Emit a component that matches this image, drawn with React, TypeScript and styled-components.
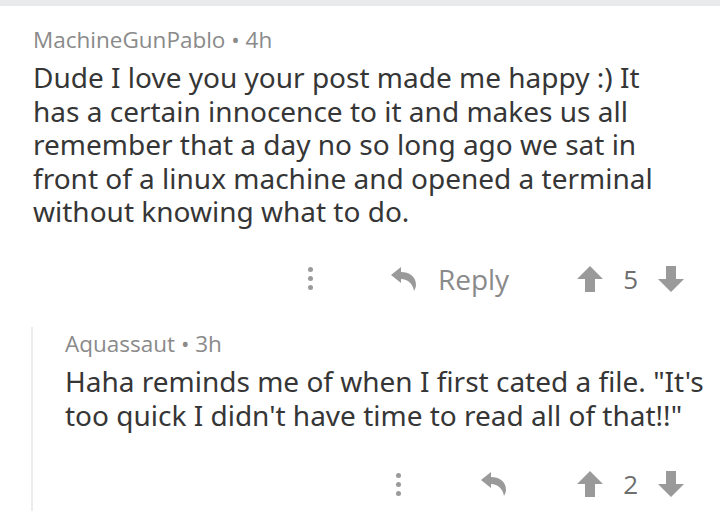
import React from "react";
import styled, { createGlobalStyle } from "styled-components";

const Global = createGlobalStyle`
  html, body { margin: 0; padding: 0; background: #ffffff; }
  body { width: 720px; height: 511px; overflow: hidden; }
`;

const Page = styled.div`
  width: 720px;
  height: 511px;
  background: #fff;
  display: flex;
  flex-direction: column;
`;

const TopBar = styled.div`
  height: 6px;
  background: #e9eaec;
  flex-shrink: 0;
`;

const Comment = styled.div<{ $nested?: boolean }>`
  display: flex;
  flex-direction: column;
  margin-left: ${(p) => (p.$nested ? "31px" : "33px")};
  padding-left: ${(p) => (p.$nested ? "32px" : "0")};
  border-left: ${(p) => (p.$nested ? "2px solid #ececec" : "none")};
  padding-top: ${(p) => (p.$nested ? "3px" : "20px")};
  flex: ${(p) => (p.$nested ? "1" : "none")};
`;

const Meta = styled.div`
  font-family: "Open Sans", "Noto Sans", sans-serif;
  font-size: 22.5px;
  line-height: 28px;
  color: #8a8a8a;
`;

const Body = styled.div<{ $nested?: boolean }>`
  font-family: "Noto Sans", "Open Sans", sans-serif;
  font-size: 28px;
  line-height: 33.6px;
  color: #363636;
  margin-top: 7px;
  padding-right: ${(p) => (p.$nested ? "10px" : "37px")};
`;

const Actions = styled.div<{ $nested?: boolean }>`
  display: flex;
  align-items: center;
  justify-content: flex-end;
  padding-right: 36px;
  height: 30px;
  margin-top: ${(p) => (p.$nested ? "37px" : "35px")};
  margin-bottom: ${(p) => (p.$nested ? "0" : "33px")};
`;

const Dots = styled.div<{ $wide?: boolean }>`
  display: flex;
  flex-direction: column;
  gap: 4px;
  margin-right: ${(p) => (p.$wide ? "80px" : "78px")};
  & > span {
    width: 5px;
    height: 5px;
    border-radius: 50%;
    background: #9a9a9a;
  }
`;

const ReplyButton = styled.div`
  display: flex;
  align-items: center;
  gap: 19px;
  margin-right: 68px;
  font-family: "Open Sans", "Noto Sans", sans-serif;
  font-size: 28px;
  color: #8a8a8a;
`;

const Vote = styled.div`
  display: flex;
  align-items: center;
  gap: 20px;
  font-family: "Open Sans", "Noto Sans", sans-serif;
  font-size: 26px;
  color: #6e6e6e;
`;

const ReplyIcon = () => (
  <svg width="28" height="24" viewBox="0 0 28 24">
    <path d="M0 8 L10 0 L10 5 C18 5 25 9 25 18 C25 20 24 22 23 24 C22 17 17 12 10 12 L10 16 Z" fill="#9a9a9a" />
  </svg>
);

const UpArrow = () => (
  <svg width="26" height="26" viewBox="0 0 26 26">
    <path d="M13 0 L26 13 L18 13 L18 26 L8 26 L8 13 L0 13 Z" fill="#9a9a9a" />
  </svg>
);

const DownArrow = () => (
  <svg width="26" height="26" viewBox="0 0 26 26">
    <path d="M13 26 L26 13 L18 13 L18 0 L8 0 L8 13 L0 13 Z" fill="#9a9a9a" />
  </svg>
);

const ActionRow = ({ label, score, nested }: { label?: string; score: number; nested?: boolean }) => (
  <Actions $nested={nested}>
    <Dots $wide={nested}>
      <span />
      <span />
      <span />
    </Dots>
    <ReplyButton>
      <ReplyIcon />
      {label && <span>{label}</span>}
    </ReplyButton>
    <Vote>
      <UpArrow />
      <span>{score}</span>
      <DownArrow />
    </Vote>
  </Actions>
);

export default function App() {
  return (
    <Page>
      <Global />
      <TopBar />
      <Comment>
        <Meta>MachineGunPablo • 4h</Meta>
        <Body>
          Dude I love you your post made me happy :) It has a certain innocence to it and makes us all remember that a
          day no so long ago we sat in front of a linux machine and opened a terminal without knowing what to do.
        </Body>
      </Comment>
      <ActionRow label="Reply" score={5} />
      <Comment $nested>
        <Meta>Aquassaut • 3h</Meta>
        <Body $nested>
          Haha reminds me of when I first cated a file. "It's too quick I didn't have time to read all of that!!"
        </Body>
        <ActionRow score={2} nested />
      </Comment>
    </Page>
  );
}
